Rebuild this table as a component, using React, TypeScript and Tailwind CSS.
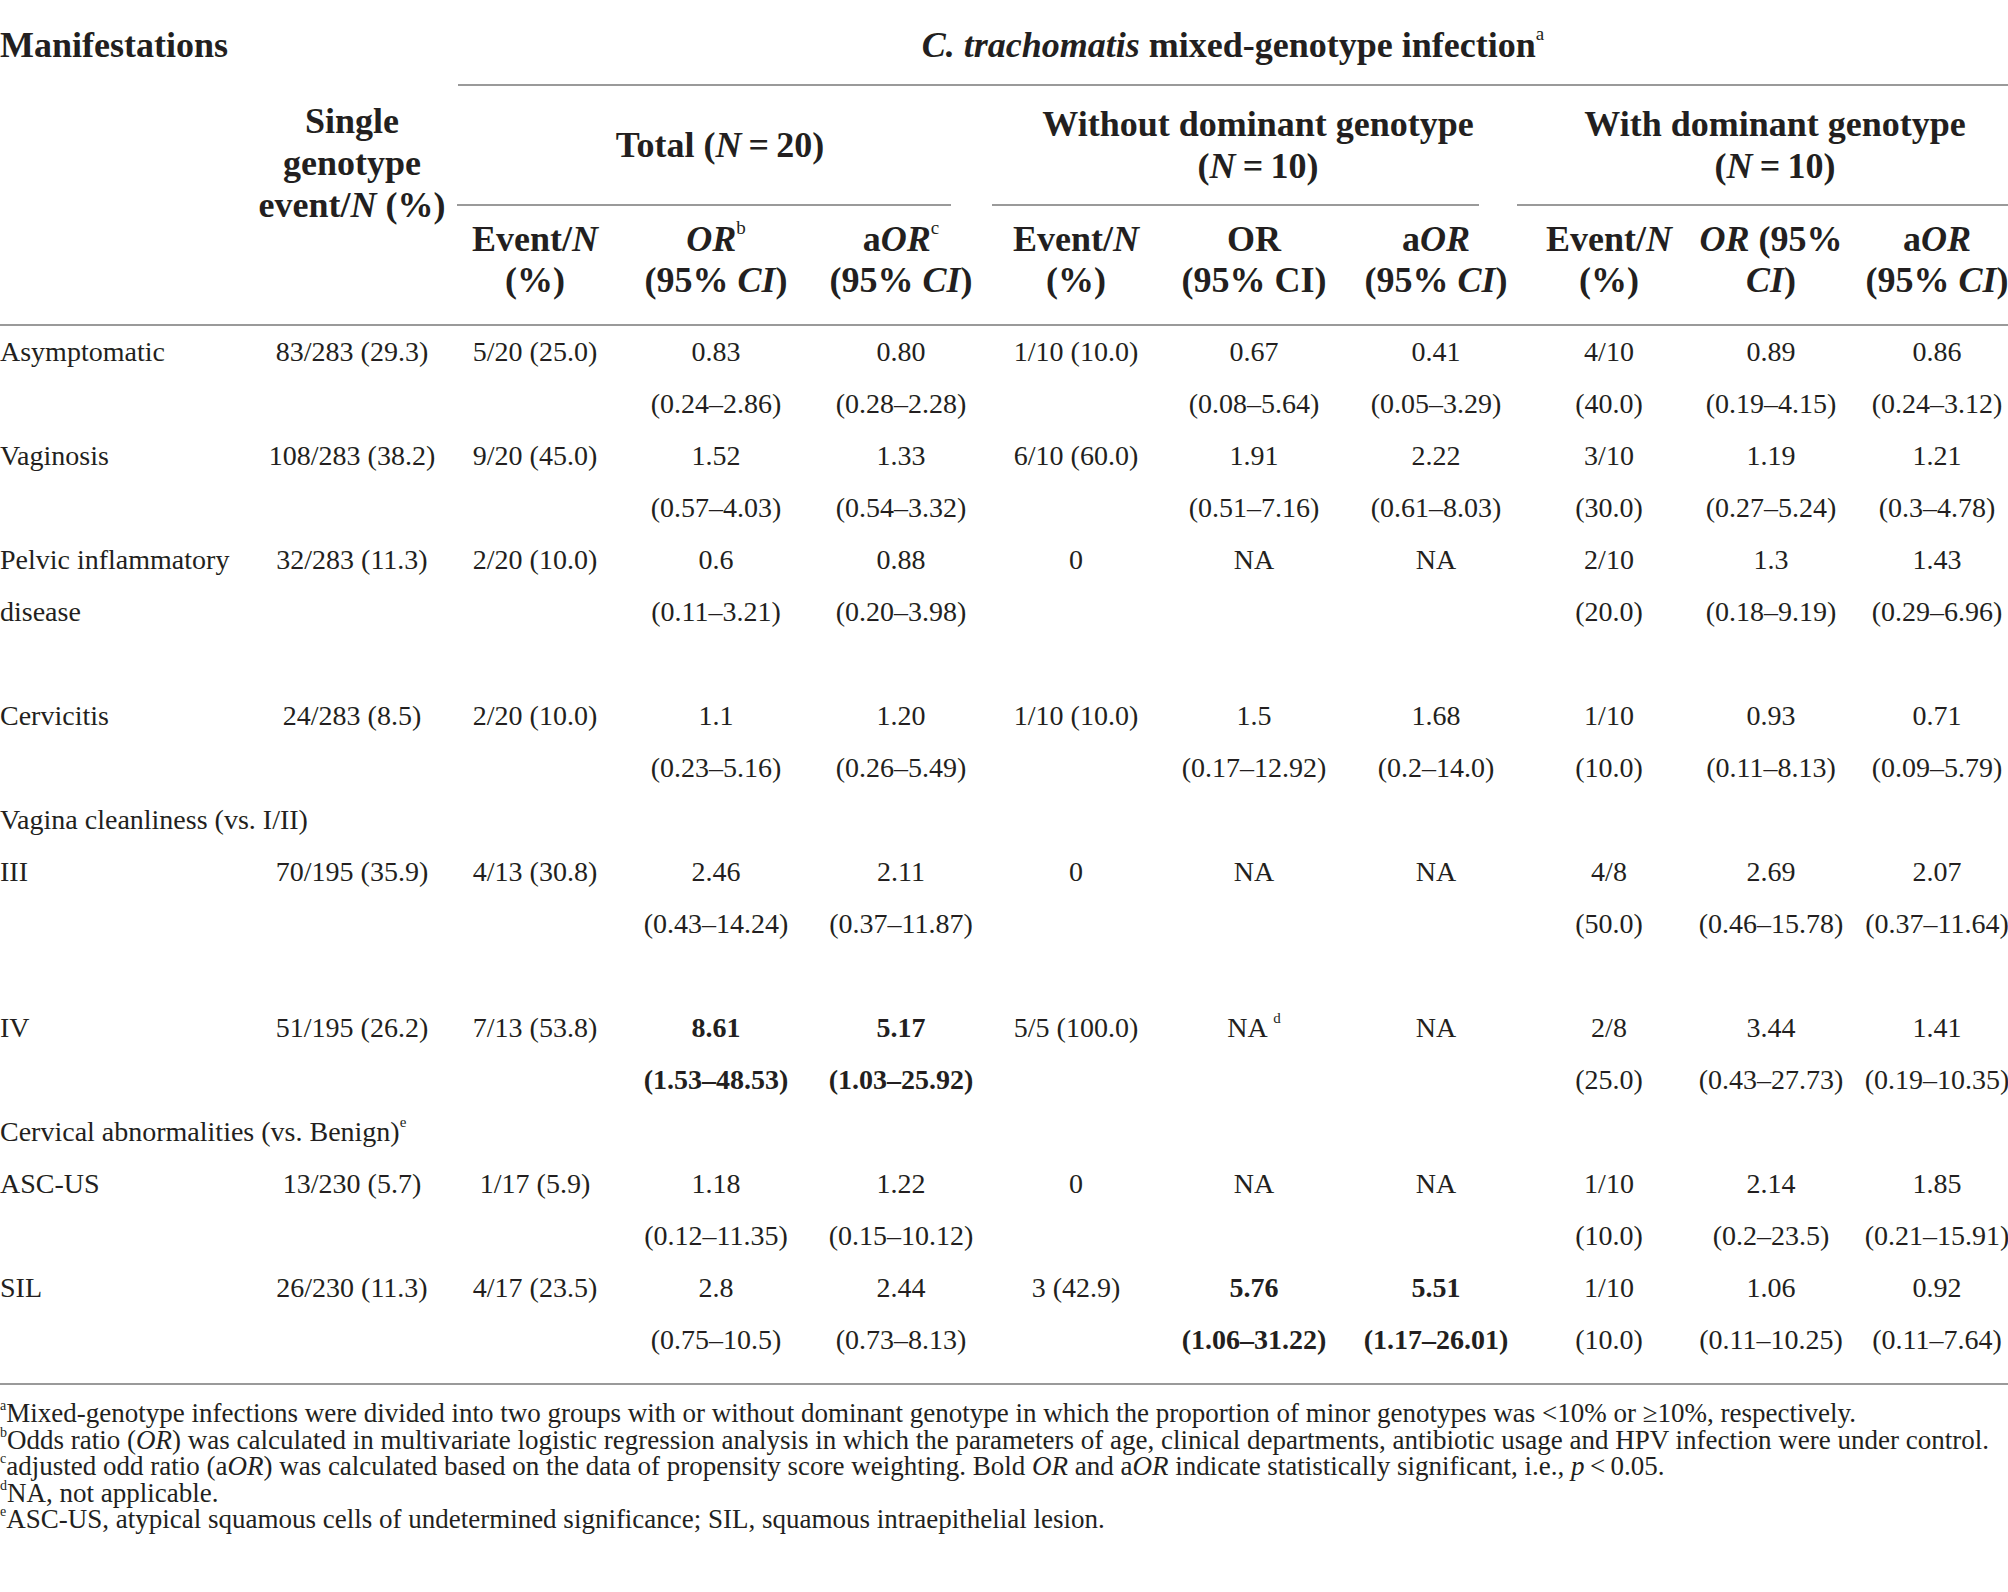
import type { ReactNode } from 'react';

type Cell = { lines: ReactNode[]; bold?: boolean };
type DataRow = { kind: 'data'; label: ReactNode[]; cells: Cell[]; lines: 1 | 2 | 3 };
type SectionRow = { kind: 'section'; label: ReactNode };
type Row = DataRow | SectionRow;

const c = (...lines: ReactNode[]): Cell => ({ lines });
const b = (...lines: ReactNode[]): Cell => ({ lines, bold: true });

const GRID =
  'grid grid-cols-[258px_188px_178px_184px_186px_164px_192px_172px_174px_150px_182px]';

const HEIGHTS = { 1: 'h-[52px]', 2: 'h-[104px]', 3: 'h-[156px]' };

const SUB_COLS = [
  'col-start-3',
  'col-start-4',
  'col-start-5',
  'col-start-6',
  'col-start-7',
  'col-start-8',
  'col-start-9',
  'col-start-10',
  'col-start-11',
];

const Sup = ({ children, className = '' }: { children: ReactNode; className?: string }) => (
  <sup className={`relative align-baseline leading-none font-normal ${className}`}>{children}</sup>
);

const rows: Row[] = [
  {
    kind: 'data',
    label: ['Asymptomatic'],
    lines: 2,
    cells: [
      c('83/283 (29.3)'),
      c('5/20 (25.0)'),
      c('0.83', '(0.24–2.86)'),
      c('0.80', '(0.28–2.28)'),
      c('1/10 (10.0)'),
      c('0.67', '(0.08–5.64)'),
      c('0.41', '(0.05–3.29)'),
      c('4/10', '(40.0)'),
      c('0.89', '(0.19–4.15)'),
      c('0.86', '(0.24–3.12)'),
    ],
  },
  {
    kind: 'data',
    label: ['Vaginosis'],
    lines: 2,
    cells: [
      c('108/283 (38.2)'),
      c('9/20 (45.0)'),
      c('1.52', '(0.57–4.03)'),
      c('1.33', '(0.54–3.32)'),
      c('6/10 (60.0)'),
      c('1.91', '(0.51–7.16)'),
      c('2.22', '(0.61–8.03)'),
      c('3/10', '(30.0)'),
      c('1.19', '(0.27–5.24)'),
      c('1.21', '(0.3–4.78)'),
    ],
  },
  {
    kind: 'data',
    label: ['Pelvic inflammatory', 'disease'],
    lines: 3,
    cells: [
      c('32/283 (11.3)'),
      c('2/20 (10.0)'),
      c('0.6', '(0.11–3.21)'),
      c('0.88', '(0.20–3.98)'),
      c('0'),
      c('NA'),
      c('NA'),
      c('2/10', '(20.0)'),
      c('1.3', '(0.18–9.19)'),
      c('1.43', '(0.29–6.96)'),
    ],
  },
  {
    kind: 'data',
    label: ['Cervicitis'],
    lines: 2,
    cells: [
      c('24/283 (8.5)'),
      c('2/20 (10.0)'),
      c('1.1', '(0.23–5.16)'),
      c('1.20', '(0.26–5.49)'),
      c('1/10 (10.0)'),
      c('1.5', '(0.17–12.92)'),
      c('1.68', '(0.2–14.0)'),
      c('1/10', '(10.0)'),
      c('0.93', '(0.11–8.13)'),
      c('0.71', '(0.09–5.79)'),
    ],
  },
  { kind: 'section', label: 'Vagina cleanliness (vs. I/II)' },
  {
    kind: 'data',
    label: ['III'],
    lines: 3,
    cells: [
      c('70/195 (35.9)'),
      c('4/13 (30.8)'),
      c('2.46', '(0.43–14.24)'),
      c('2.11', '(0.37–11.87)'),
      c('0'),
      c('NA'),
      c('NA'),
      c('4/8', '(50.0)'),
      c('2.69', '(0.46–15.78)'),
      c('2.07', '(0.37–11.64)'),
    ],
  },
  {
    kind: 'data',
    label: ['IV'],
    lines: 2,
    cells: [
      c('51/195 (26.2)'),
      c('7/13 (53.8)'),
      b('8.61', '(1.53–48.53)'),
      b('5.17', '(1.03–25.92)'),
      c('5/5 (100.0)'),
      c(
        <>
          NA <Sup className="text-[15px] -top-[14px]">d</Sup>
        </>
      ),
      c('NA'),
      c('2/8', '(25.0)'),
      c('3.44', '(0.43–27.73)'),
      c('1.41', '(0.19–10.35)'),
    ],
  },
  {
    kind: 'section',
    label: (
      <>
        Cervical abnormalities (vs. Benign)
        <Sup className="text-[15px] -top-[14px]">e</Sup>
      </>
    ),
  },
  {
    kind: 'data',
    label: ['ASC-US'],
    lines: 2,
    cells: [
      c('13/230 (5.7)'),
      c('1/17 (5.9)'),
      c('1.18', '(0.12–11.35)'),
      c('1.22', '(0.15–10.12)'),
      c('0'),
      c('NA'),
      c('NA'),
      c('1/10', '(10.0)'),
      c('2.14', '(0.2–23.5)'),
      c('1.85', '(0.21–15.91)'),
    ],
  },
  {
    kind: 'data',
    label: ['SIL'],
    lines: 2,
    cells: [
      c('26/230 (11.3)'),
      c('4/17 (23.5)'),
      c('2.8', '(0.75–10.5)'),
      c('2.44', '(0.73–8.13)'),
      c('3 (42.9)'),
      b('5.76', '(1.06–31.22)'),
      b('5.51', '(1.17–26.01)'),
      c('1/10', '(10.0)'),
      c('1.06', '(0.11–10.25)'),
      c('0.92', '(0.11–7.64)'),
    ],
  },
];

const subHeads: ReactNode[][] = [
  [<>Event/<i>N</i></>, '(%)'],
  [<><i>OR</i><Sup className="text-[19px] -top-[17px]">b</Sup></>, <>(95% <i>CI</i>)</>],
  [<>a<i>OR</i><Sup className="text-[19px] -top-[17px]">c</Sup></>, <>(95% <i>CI</i>)</>],
  [<>Event/<i>N</i></>, '(%)'],
  ['OR', '(95% CI)'],
  [<>a<i>OR</i></>, <>(95% <i>CI</i>)</>],
  [<>Event/<i>N</i></>, '(%)'],
  [<><i>OR</i> (95%</>, <><i>CI</i>)</>],
  [<>a<i>OR</i></>, <>(95% <i>CI</i>)</>],
];

const footnotes: { mark: string; text: ReactNode }[] = [
  {
    mark: 'a',
    text: 'Mixed-genotype infections were divided into two groups with or without dominant genotype in which the proportion of minor genotypes was <10% or ≥10%, respectively.',
  },
  {
    mark: 'b',
    text: (
      <>
        Odds ratio (<i>OR</i>) was calculated in multivariate logistic regression analysis in which the
        parameters of age, clinical departments, antibiotic usage and HPV infection were under control.
      </>
    ),
  },
  {
    mark: 'c',
    text: (
      <>
        adjusted odd ratio (a<i>OR</i>) was calculated based on the data of propensity score weighting. Bold{' '}
        <i>OR</i> and a<i>OR</i> indicate statistically significant, i.e., <i>p</i>&thinsp;&lt;&thinsp;0.05.
      </>
    ),
  },
  { mark: 'd', text: 'NA, not applicable.' },
  {
    mark: 'e',
    text: 'ASC-US, atypical squamous cells of undetermined significance; SIL, squamous intraepithelial lesion.',
  },
];

function GroupHead({ lines, lineClass }: { lines: ReactNode[]; lineClass: string }) {
  return (
    <div className="flex flex-col">
      <div className="flex flex-1 flex-col items-center justify-center text-center leading-[42px]">
        {lines.map((l, i) => (
          <div key={i} className="whitespace-nowrap">
            {l}
          </div>
        ))}
      </div>
      <div className={`h-[2px] bg-[#9a9a9a] ${lineClass}`} />
    </div>
  );
}

function Header() {
  return (
    <div className={`${GRID} grid-rows-[86px_120px_118px] text-[36px] font-bold`}>
      <div className="col-start-1 row-start-1 pt-[24px] leading-[42px] whitespace-nowrap">Manifestations</div>
      <div className="col-start-3 col-span-9 row-start-1 ml-[12px] flex flex-col">
        <div className="flex-1 pt-[24px] pr-[20px] text-center leading-[42px] whitespace-nowrap">
          <i>C. trachomatis</i> mixed-genotype infection
          <Sup className="text-[19px] -top-[17px]">a</Sup>
        </div>
        <div className="h-[2px] bg-[#9a9a9a]" />
      </div>

      <div className="col-start-2 row-start-2 row-span-2 pt-[14px] text-center leading-[42px]">
        <div>Single</div>
        <div>genotype</div>
        <div className="whitespace-nowrap">
          event/<i>N</i> (%)
        </div>
      </div>

      <div className="col-start-3 col-span-3 row-start-2 grid">
        <GroupHead lines={[<>Total (<i>N</i>&thinsp;=&thinsp;20)</>]} lineClass="ml-[11px] mr-[43px]" />
      </div>
      <div className="col-start-6 col-span-3 row-start-2 grid">
        <GroupHead
          lines={['Without dominant genotype', <>(<i>N</i>&thinsp;=&thinsp;10)</>]}
          lineClass="-ml-[2px] mr-[43px]"
        />
      </div>
      <div className="col-start-9 col-span-3 row-start-2 grid">
        <GroupHead
          lines={['With dominant genotype', <>(<i>N</i>&thinsp;=&thinsp;10)</>]}
          lineClass="-ml-[5px]"
        />
      </div>

      {subHeads.map((lines, i) => (
        <div key={i} className={`${SUB_COLS[i]} row-start-3 pt-[13px] text-center leading-[41px]`}>
          {lines.map((l, j) => (
            <div key={j} className="whitespace-nowrap">
              {l}
            </div>
          ))}
        </div>
      ))}
    </div>
  );
}

function BodyRow({ row }: { row: Row }) {
  if (row.kind === 'section') {
    return <div className="h-[52px] leading-[52px] whitespace-nowrap">{row.label}</div>;
  }
  return (
    <div className={`${GRID} ${HEIGHTS[row.lines]}`}>
      <div>
        {row.label.map((l, i) => (
          <div key={i} className="h-[52px] leading-[52px] whitespace-nowrap">
            {l}
          </div>
        ))}
      </div>
      {row.cells.map((cell, i) => (
        <div key={i} className={`text-center ${cell.bold ? 'font-bold' : ''}`}>
          {cell.lines.map((l, j) => (
            <div key={j} className="h-[52px] leading-[52px] whitespace-nowrap">
              {l}
            </div>
          ))}
        </div>
      ))}
    </div>
  );
}

export default function App() {
  return (
    <div className="h-[1592px] w-[2008px] overflow-hidden bg-white font-['Liberation_Serif','Times_New_Roman',serif] text-[#231f20]">
      <div className="w-[2028px]">
        <Header />
        <div className="h-[2px] bg-[#9a9a9a]" />

        <div className="pb-[17px] text-[28px]">
          {rows.map((row, i) => (
            <BodyRow key={i} row={row} />
          ))}
        </div>
        <div className="h-[2px] bg-[#9a9a9a]" />

        <div className="pt-[15px] text-[27px] leading-[26.6px]">
          {footnotes.map((f) => (
            <div key={f.mark} className="whitespace-nowrap">
              <Sup className="text-[14px] -top-[12px]">{f.mark}</Sup>
              {f.text}
            </div>
          ))}
        </div>
      </div>
    </div>
  );
}
